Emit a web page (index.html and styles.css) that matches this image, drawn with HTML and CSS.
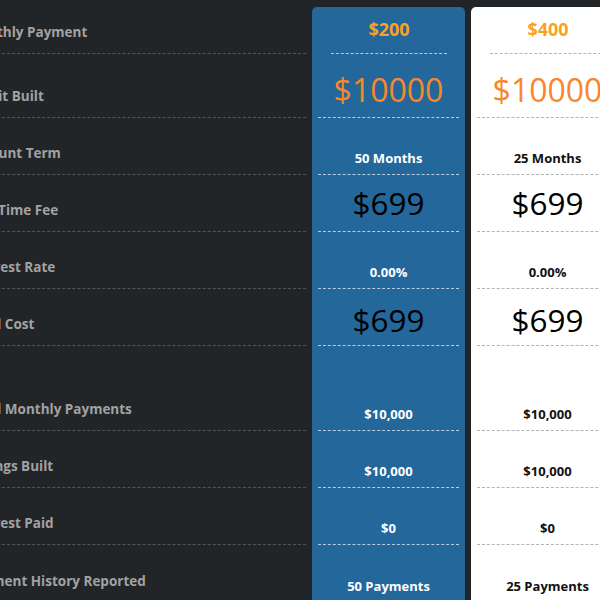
FILE: index.html
```html
<!DOCTYPE html>
<html>
<head>
<meta charset="utf-8">
<link rel="stylesheet" href="styles.css">
</head>
<body>
<div class="compare">
  <div class="col labels">
    <div class="cell r0 lbl">Monthly Payment</div>
    <div class="cell r1 lbl">Credit Built</div>
    <div class="cell r2 lbl">Account Term</div>
    <div class="cell r3 lbl">One Time Fee</div>
    <div class="cell r4 lbl">Interest Rate</div>
    <div class="cell r5 lbl">Total Cost</div>
    <div class="cell r6 lbl">Total Monthly Payments</div>
    <div class="cell r7 lbl">Savings Built</div>
    <div class="cell r8 lbl">Interest Paid</div>
    <div class="cell r9 lbl">Payment History Reported</div>
  </div>
  <div class="col plan plan-blue">
    <div class="cell r0 head">$200</div>
    <div class="cell r1 big orange">$10000</div>
    <div class="cell r2 small">50 Months</div>
    <div class="cell r3 big fee">$699</div>
    <div class="cell r4 small">0.00%</div>
    <div class="cell r5 big cost">$699</div>
    <div class="cell r6 small">$10,000</div>
    <div class="cell r7 small">$10,000</div>
    <div class="cell r8 small">$0</div>
    <div class="cell r9 small">50 Payments</div>
  </div>
  <div class="col plan plan-white">
    <div class="cell r0 head">$400</div>
    <div class="cell r1 big orange">$10000</div>
    <div class="cell r2 small">25 Months</div>
    <div class="cell r3 big fee">$699</div>
    <div class="cell r4 small">0.00%</div>
    <div class="cell r5 big cost">$699</div>
    <div class="cell r6 small">$10,000</div>
    <div class="cell r7 small">$10,000</div>
    <div class="cell r8 small">$0</div>
    <div class="cell r9 small">25 Payments</div>
  </div>
</div>
</body>
</html>
```
FILE: styles.css
```css
html, body {
  margin: 0;
  padding: 0;
  overflow: hidden;
  background: #222528;
  font-family: "Open Sans", "Noto Sans", sans-serif;
}

.compare {
  display: flex;
  gap: 6px;
  margin-left: -33px;
  padding-top: 7px;
  width: 680px;
}

.col {
  display: grid;
  grid-template-rows: 47px 64px 57px 57px 57px 57px 85px 57px 57px 57px;
}

.labels {
  width: 339px;
  flex: none;
}

.plan {
  width: 153px;
  flex: none;
  border-radius: 5px 5px 0 0;
  padding-bottom: 20px;
}

.plan-blue {
  background: #23679b;
  color: #ffffff;
}

.plan-white {
  background: #ffffff;
  color: #111111;
}

.cell {
  display: flex;
  align-items: flex-end;
  box-sizing: border-box;
  white-space: nowrap;
}

.labels .cell {
  border-bottom: 1px dashed #54575a;
  padding-bottom: 13px;
  font-size: 13.5px;
  line-height: 16px;
  font-weight: 700;
  color: #a2a2a2;
}

.labels .r9 { border-bottom: none; }

.plan .cell {
  justify-content: center;
  margin: 0 6px 0 6px;
}

.plan-blue .cell { border-bottom: 1px dashed #b9cde0; }
.plan-white .cell { border-bottom: 1px dashed #b4b4b4; }
.plan .r9 { border-bottom: none; }

.plan .r0 { margin: 0 18px 0 19px; }

.head {
  font-size: 18px;
  line-height: 22px;
  font-weight: 700;
  color: #f9a31d;
  padding-bottom: 13px;
}

.big {
  font-size: 31.5px;
  line-height: 40px;
  font-weight: 400;
  padding-bottom: 8px;
}

.orange {
  color: #f8862a;
  font-size: 32px;
  padding-bottom: 7px;
}

.plan .fee, .plan .cost { color: #000000; }
.cost { padding-bottom: 5px; }

.small {
  font-size: 13px;
  line-height: 16px;
  font-weight: 700;
  padding-bottom: 8px;
}
```
